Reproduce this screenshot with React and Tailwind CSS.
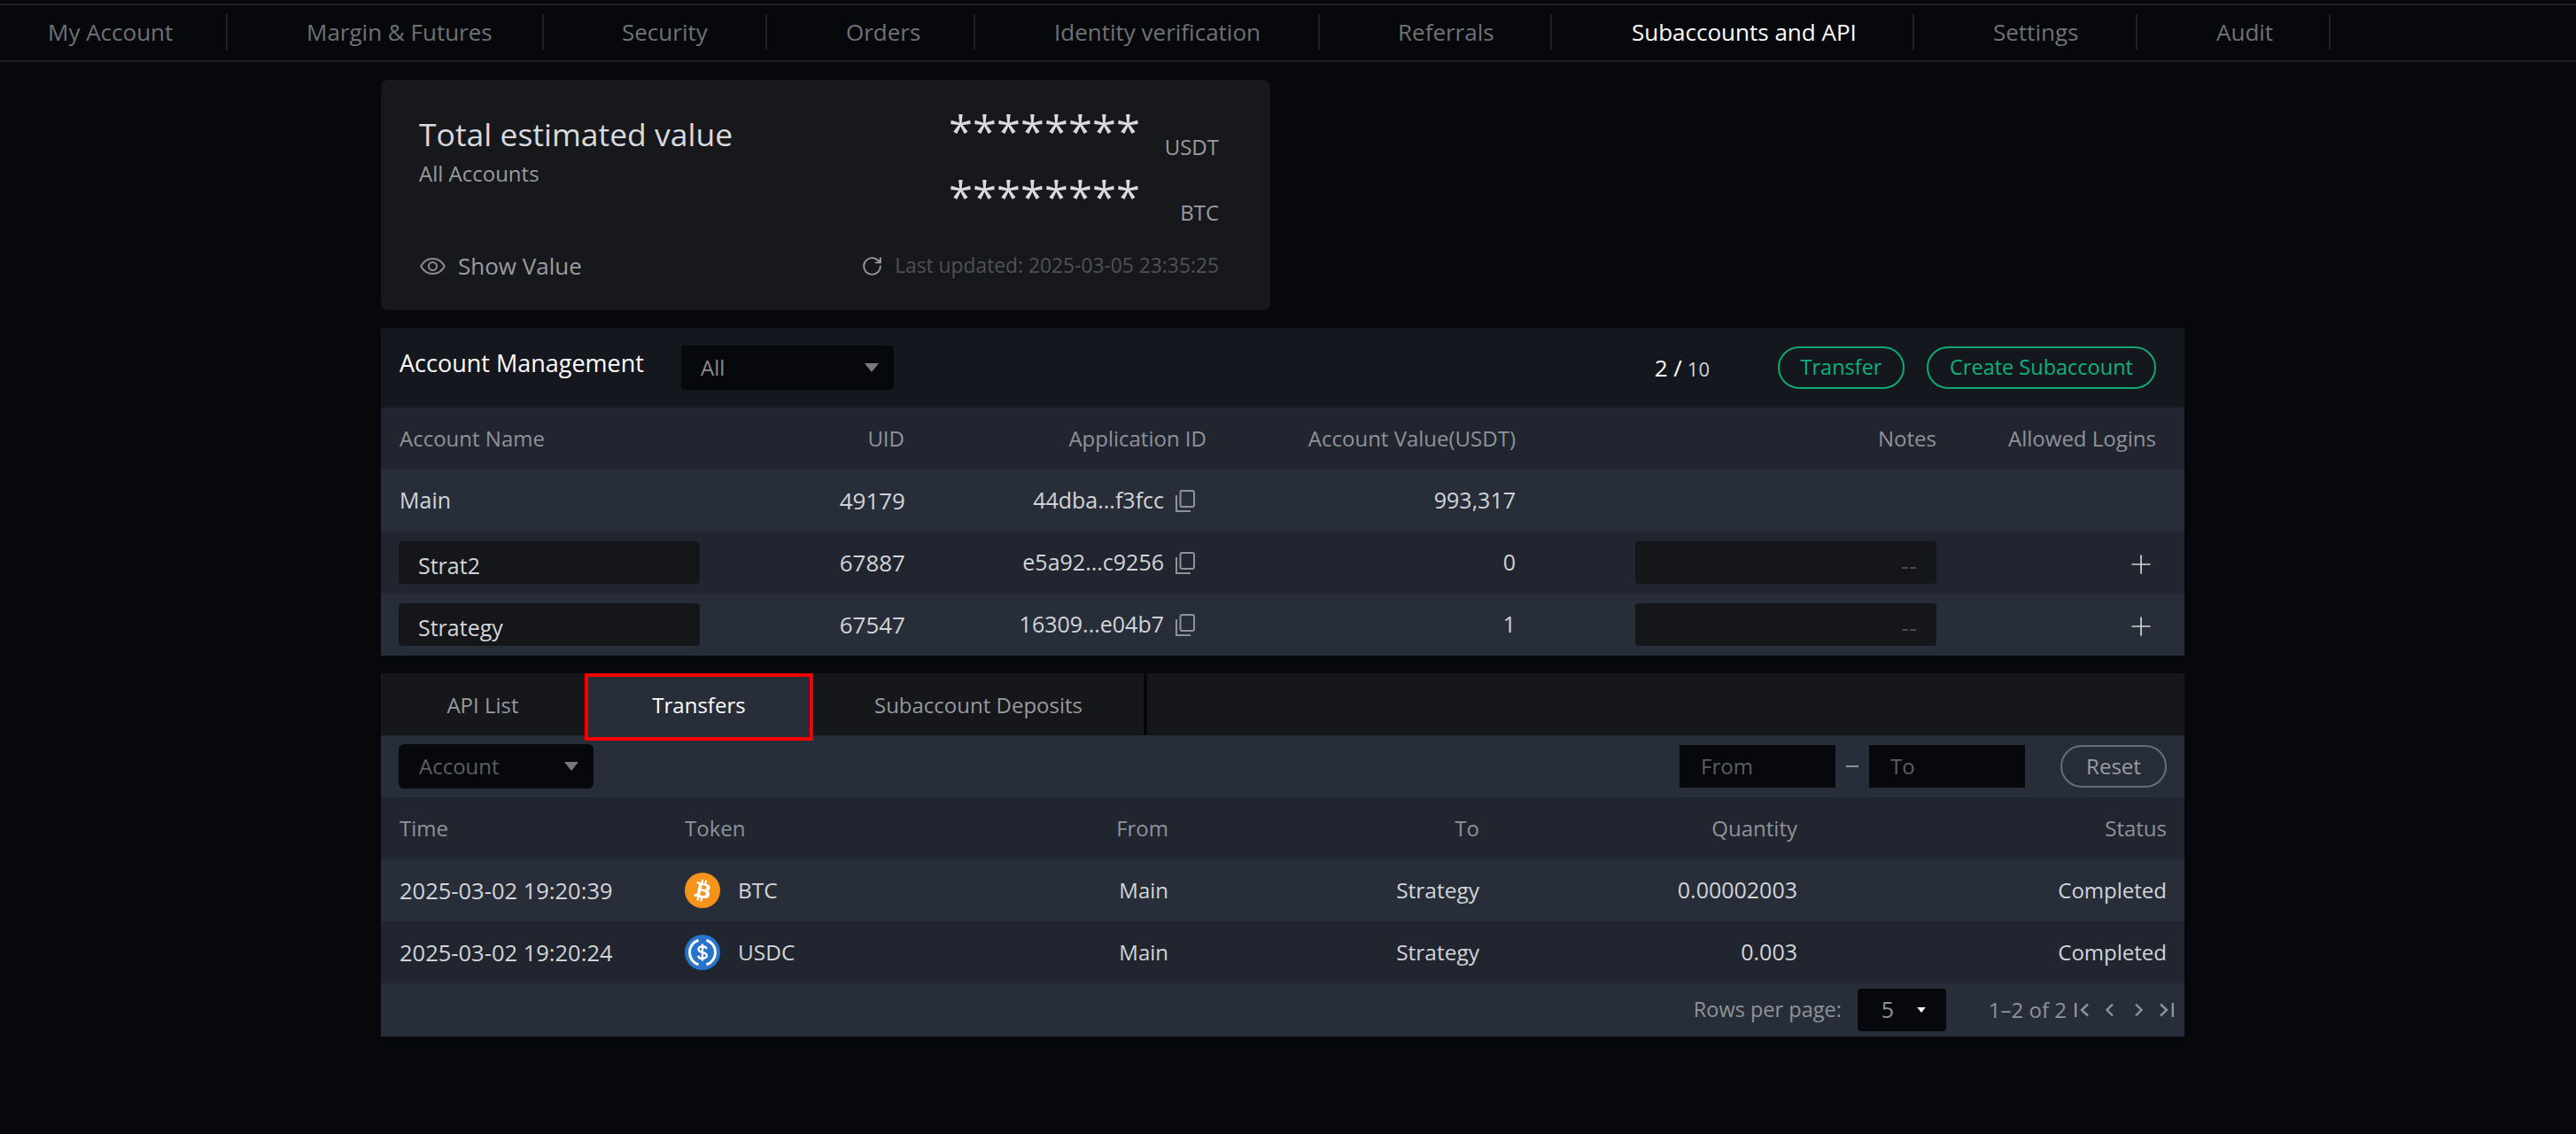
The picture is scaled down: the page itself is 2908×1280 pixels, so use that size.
import { RotateCw, Plus } from 'lucide-react';

const FONT = "font-['Open_Sans','Noto_Sans',sans-serif]";

const NAV = [
  { label: 'My Account', w: 'w-[257px]', pl: 'pl-[54px]' },
  { label: 'Margin & Futures', w: 'w-[357px]', pl: 'pl-[89px]' },
  { label: 'Security', w: 'w-[252px]', pl: 'pl-[88px]' },
  { label: 'Orders', w: 'w-[235px]', pl: 'pl-[89px]' },
  { label: 'Identity verification', w: 'w-[389px]', pl: 'pl-[89px]' },
  { label: 'Referrals', w: 'w-[262px]', pl: 'pl-[88px]' },
  { label: 'Subaccounts and API', w: 'w-[409px]', pl: 'pl-[90px]', active: true },
  { label: 'Settings', w: 'w-[252px]', pl: 'pl-[89px]' },
  { label: 'Audit', w: 'w-[218px]', pl: 'pl-[89px]' },
];

const ACCOUNTS = [
  { name: 'Main', uid: '49179', app: '44dba...f3fcc', value: '993,317', main: true },
  { name: 'Strat2', uid: '67887', app: 'e5a92...c9256', value: '0' },
  { name: 'Strategy', uid: '67547', app: '16309...e04b7', value: '1' },
];

const TRANSFERS = [
  { time: '2025-03-02 19:20:39', token: 'BTC', qty: '0.00002003' },
  { time: '2025-03-02 19:20:24', token: 'USDC', qty: '0.003' },
];

function Caret({ className }) {
  return (
    <svg viewBox="0 0 16 10" className={className} fill="currentColor">
      <path d="M0 0h16L8 10z" />
    </svg>
  );
}

function EyeIcon() {
  return (
    <svg viewBox="0 0 29 19" className="ml-px h-[19px] w-[29px]" fill="none" stroke="#8a8c90" strokeWidth="2">
      <path d="M1.2 9.5C4 4.2 8.7 1 14.5 1s10.500 3.200 13.300 8.500C25 14.800 20.300 18 14.500 18S4 14.800 1.200 9.500z" />
      <circle cx="14.500" cy="9.500" r="4.500" />
    </svg>
  );
}

function CopyIcon() {
  return (
    <svg viewBox="0 0 22 25" className="ml-[13px] mr-[13px] h-[25px] w-[22px]" fill="none" stroke="#8f9298" strokeWidth="2">
      <rect x="5.500" y="1" width="15.500" height="18" rx="2" />
      <path d="M1 6v18h16" />
    </svg>
  );
}

function BtcIcon() {
  return (
    <svg viewBox="0 0 40 40" className="h-10 w-10 shrink-0">
      <circle cx="20" cy="20" r="20" fill="#f7931a" />
      <path
        fill="#fff"
        d="M28.6 17.500c.4-2.600-1.600-4-4.300-5l.9-3.500-2.100-.5-.9 3.400-1.700-.4.9-3.400-2.200-.6-.9 3.500-1.400-.3-2.900-.7-.6 2.300s1.600.4 1.600.4c.9.2 1 .8 1 1.300l-1 4-1.400 5.600c-.1.3-.4.7-1 .6 0 0-1.600-.4-1.600-.4l-1.100 2.500 2.800.7 1.500.4-.9 3.600 2.100.5.9-3.500 1.700.4-.9 3.500 2.200.5.9-3.600c3.700.7 6.400.4 7.600-2.900.9-2.700 0-4.200-2-5.200 1.400-.3 2.500-1.300 2.800-3.200zm-4.900 6.900c-.7 2.700-5.200 1.200-6.600.9l1.200-4.800c1.500.4 6.100 1.100 5.400 3.900zm.7-7c-.6 2.400-4.400 1.200-5.600.9l1.100-4.300c1.200.3 5.200.9 4.500 3.400z"
      />
    </svg>
  );
}

function UsdcIcon() {
  return (
    <svg viewBox="0 0 40 40" className="h-10 w-10 shrink-0">
      <circle cx="20" cy="20" r="20" fill="#2775ca" />
      <path fill="none" stroke="#fff" strokeWidth="3" d="M15.500 6.200a14.500 14.500 0 0 0 0 27.600M24.500 6.200a14.500 14.500 0 0 1 0 27.600" />
      <path fill="none" stroke="#fff" strokeWidth="2.400" d="M24.600 16.200c-.3-1.900-2.200-3-4.600-3s-4.500 1.300-4.500 3.300c0 4.800 9.400 2.300 9.400 7.100 0 2-2.200 3.300-4.900 3.300s-4.500-1.200-4.800-3.200M20 10.500v19" />
    </svg>
  );
}

function PagerIcon({ d, wide }) {
  return (
    <svg viewBox={wide ? '0 0 16 16' : '0 0 9 16'} className={wide ? 'h-4 w-4' : 'h-4 w-[9px]'} fill="none" stroke="#8f9298" strokeWidth="2.400">
      <path d={d} />
    </svg>
  );
}

function AccountRow({ row, dark }) {
  return (
    <div className={`grid h-[70px] grid-cols-[572px_340px_349px_475px_248px] items-center pl-5 text-[25px] text-[#d2d4d7] ${dark ? 'bg-[#212530]' : 'bg-[#282e39]'}`}>
      <div className="flex items-center justify-end">
        {row.main ? (
          <span className="ml-px mr-auto">{row.name}</span>
        ) : (
          <span className="mr-auto flex h-12 w-[340px] items-center rounded bg-[#14161a] px-[22px] pt-[7px]">{row.name}</span>
        )}
        <span className="text-[26px]">{row.uid}</span>
      </div>
      <div className="flex items-center justify-end">
        <span>{row.app}</span>
        <CopyIcon />
      </div>
      <div className="text-right">{row.value}</div>
      <div className="flex justify-end">
        {!row.main && (
          <span className="flex h-12 w-[340px] items-center justify-end rounded bg-[#14161a] px-[22px] pt-[3px] text-[28px] text-[#4b4d51]">--</span>
        )}
      </div>
      <div className="flex justify-end">
        {!row.main && <Plus size={34} strokeWidth={1.200} className="mt-[3px] text-[#d2d4d7]" />}
      </div>
    </div>
  );
}

function TransferRow({ row, dark }) {
  return (
    <div className={`grid h-[70px] grid-cols-[322px_300px_246px_351px_359px_417px] items-center pl-[21px] text-[24px] text-[#d2d4d7] ${dark ? 'bg-[#212530]' : 'bg-[#282e39]'}`}>
      <div className="text-[25.500px]">{row.time}</div>
      <div className="flex items-center gap-5">
        {row.token === 'BTC' ? <BtcIcon /> : <UsdcIcon />}
        <span className="text-[24.500px]">{row.token}</span>
      </div>
      <div className="text-right">Main</div>
      <div className="text-right text-[24.500px]">Strategy</div>
      <div className="text-right text-[25px]">{row.qty}</div>
      <div className="text-right">Completed</div>
    </div>
  );
}

export default function App() {
  return (
    <div className={`min-h-screen bg-[#06080b] pt-1 ${FONT}`}>
      <nav className="flex h-[66px] items-start border-y-2 border-[#1f2124] pt-[10px] text-[26px] text-[#6f7175]">
        {NAV.map((item) => (
          <div key={item.label} className={`flex h-10 shrink-0 items-center border-r-2 border-[#1f2124] ${item.w} ${item.pl} ${item.active ? 'font-medium text-white' : ''}`}>
            <span className="whitespace-nowrap">{item.label}</span>
          </div>
        ))}
      </nav>

      <main className="ml-[430px] flex w-[2036px] flex-col gap-5 pt-5">
        <section className="flex h-[260px] w-[1004px] flex-col rounded-lg bg-[#16181c] pl-[43px] pr-[58px]">
          <div className="flex items-start justify-between">
            <div className="pt-[39px]">
              <h2 className="text-[35.500px] leading-[44px] text-[#d9dadc]">Total estimated value</h2>
              <p className="mt-[7px] text-[24px] leading-8 text-[#9a9c9f]">All Accounts</p>
            </div>
            <div className="pt-4 text-[#d9dadc]">
              {['USDT', 'BTC'].map((unit) => (
                <div key={unit} className="flex h-[74px] items-end">
                  <span className="text-[49px] leading-[64px]">********</span>
                  <span className="-mb-1 w-[89px] text-right text-[24px] leading-9 text-[#9a9c9f]">{unit}</span>
                </div>
              ))}
            </div>
          </div>
          <div className="mb-[30px] mt-auto flex h-10 items-center justify-between">
            <div className="flex items-center gap-[14px] text-[26px] text-[#9a9c9f]">
              <EyeIcon />
              <span>Show Value</span>
            </div>
            <div className="flex items-center gap-[13px] text-[22.800px] text-[#4f5155]">
              <RotateCw size={25} strokeWidth={1.800} className="text-[#9a9c9f]" />
              <span>Last updated: 2025-03-05 23:35:25</span>
            </div>
          </div>
        </section>

        <section>
          <div className="flex h-[90px] items-center bg-[#15171e] pl-[21px] pr-[32px]">
            <h2 className="mb-[10px] w-[318px] text-[27px] font-medium text-white">Account Management</h2>
            <div className="flex h-[50px] w-[240px] items-center justify-between rounded bg-[#06080b] pl-[22px] pr-[17px] text-[24px] text-[#8a8c90]">
              <span>All</span>
              <Caret className="h-[10px] w-4 text-[#77797d]" />
            </div>
            <div className="ml-auto flex items-baseline gap-[6px] text-[26px] font-medium text-white">
              2 / <span className="text-[22px] font-normal text-[#d2d4d7]">10</span>
            </div>
            <button className="ml-[77px] h-12 w-[143px] rounded-full border-2 border-[#0fa873] text-[23.500px] font-medium text-[#0db27c]">Transfer</button>
            <button className="ml-[25px] h-12 w-[259px] rounded-full border-2 border-[#0fa873] text-[23.500px] font-medium text-[#0db27c]">Create Subaccount</button>
          </div>
          <div className="grid h-[70px] grid-cols-[570px_341px_349px_475px_248px] items-center bg-[#212530] pl-[21px] text-[24px] text-[#8f9298]">
            <div className="flex justify-between"><span>Account Name</span><span>UID</span></div>
            <div className="text-right">Application ID</div>
            <div className="text-right">Account Value(USDT)</div>
            <div className="text-right">Notes</div>
            <div className="text-right">Allowed Logins</div>
          </div>
          {ACCOUNTS.map((row, i) => (
            <AccountRow key={row.uid} row={row} dark={i === 1} />
          ))}
        </section>

        <section>
          <div className="flex h-[70px] bg-[#15171b] text-[24px] text-[#97999d]">
            <div className="flex w-[230px] items-center justify-center pt-[2px]">API List</div>
            <div className="relative flex w-[258px] items-center justify-center bg-[#282e39] pt-[2px] font-medium text-white">
              Transfers
              <span className="absolute left-0 top-0 h-[76px] w-[258px] border-4 border-[#f60000]" />
            </div>
            <div className="flex w-[373px] items-center justify-center pt-[2px]">Subaccount Deposits</div>
            <div className="w-1 bg-[#06080b]" />
          </div>
          <div className="flex h-[70px] items-center bg-[#282e39] pl-5 pr-5 text-[24px]">
            <div className="flex h-[50px] w-[220px] items-center justify-between rounded-md bg-[#06080b] pl-[23px] pr-[17px] text-[#5c5e62]">
              <span>Account</span>
              <Caret className="h-[10px] w-4 text-[#77797d]" />
            </div>
            <div className="ml-auto flex h-12 w-[176px] items-center bg-[#06080b] pl-6 text-[#5c5e62]">From</div>
            <div className="mx-[12px] h-[2px] w-[14px] bg-[#8f9298]" />
            <div className="flex h-12 w-[176px] items-center bg-[#06080b] pl-6 text-[#5c5e62]">To</div>
            <button className="ml-10 h-12 w-[120px] rounded-full border-2 border-[#696d74] text-[#9a9da3]">Reset</button>
          </div>
          <div className="grid h-[70px] grid-cols-[322px_300px_246px_351px_359px_417px] items-center bg-[#212530] pl-[21px] text-[24px] text-[#8f9298]">
            <div>Time</div>
            <div>Token</div>
            <div className="text-right">From</div>
            <div className="text-right">To</div>
            <div className="text-right">Quantity</div>
            <div className="text-right">Status</div>
          </div>
          {TRANSFERS.map((row, i) => (
            <TransferRow key={row.time} row={row} dark={i === 1} />
          ))}
          <div className="flex h-[60px] items-center justify-end bg-[#282e39] pr-3 text-[24px] text-[#8f9298]">
            <span className="text-[23.500px]">Rows per page:</span>
            <div className="ml-[18px] flex h-12 w-[100px] items-center justify-between rounded bg-[#06080b] pl-[27px] pr-[23px] text-[25px]">
              <span>5</span>
              <Caret className="h-[6px] w-[10px] text-white" />
            </div>
            <span className="ml-12 whitespace-nowrap">1–2 of 2</span>
            <div className="ml-[9px] flex items-center">
              <PagerIcon wide d="M1.200 0v16M15 1.500 8 8l7 6.500" />
              <span className="ml-[19px]"><PagerIcon d="M8 1.500 1.500 8 8 14.500" /></span>
              <span className="ml-6"><PagerIcon d="M1 1.500 7.500 8 1 14.500" /></span>
              <span className="ml-[19px]"><PagerIcon wide d="M1 1.500 8 8l-7 6.500M14.800 0v16" /></span>
            </div>
          </div>
        </section>
      </main>
    </div>
  );
}
